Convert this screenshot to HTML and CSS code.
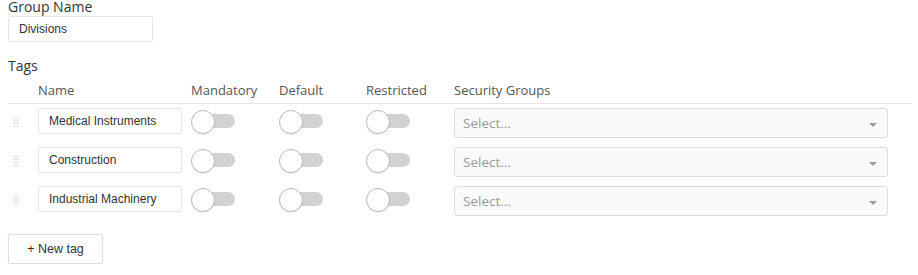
FILE: index.html
```html
<!DOCTYPE HTML>
<html>

<head>
  <title>Tag Group</title>
  <meta charset="utf-8">
  <link rel="stylesheet" href="styles.css">
</head>
<body>
  <form class="group-form" name="group_form">
    <label class="field-label" for="group_name_input">Group Name</label>
    <input class="text-input group-name" id="group_name_input" type="text" value="Divisions">

    <div class="field-label tags-label">Tags</div>
    <div class="tags-table">
      <div class="tags-row tags-head">
        <span></span>
        <span>Name</span>
        <span>Mandatory</span>
        <span>Default</span>
        <span>Restricted</span>
        <span>Security Groups</span>
      </div>

      <div class="tags-row tag">
        <span class="drag-handle"></span>
        <input class="text-input tag-name" type="text" value="Medical Instruments">
        <span class="toggle"></span>
        <span class="toggle"></span>
        <span class="toggle"></span>
        <div class="select"><span>Select...</span><span class="select-arrow"></span></div>
      </div>
      <div class="tags-row tag">
        <span class="drag-handle"></span>
        <input class="text-input tag-name" type="text" value="Construction">
        <span class="toggle"></span>
        <span class="toggle"></span>
        <span class="toggle"></span>
        <div class="select"><span>Select...</span><span class="select-arrow"></span></div>
      </div>
      <div class="tags-row tag">
        <span class="drag-handle"></span>
        <input class="text-input tag-name" type="text" value="Industrial Machinery">
        <span class="toggle"></span>
        <span class="toggle"></span>
        <span class="toggle"></span>
        <div class="select"><span>Select...</span><span class="select-arrow"></span></div>
      </div>
    </div>

    <button type="button" class="btn new-tag">+ New tag</button>
  </form>
</body>

</html>
```

FILE: styles.css
```css
* {
  box-sizing: border-box;
}
body {
  margin: 0;
  padding: 0 6px 0 8px;
  font-family: "Open Sans", sans-serif;
  color: #333;
  background: #fff;
}
.group-form {
  display: flex;
  flex-direction: column;
  align-items: flex-start;
}
.field-label {
  display: block;
  font-size: 14px;
  line-height: 14px;
  height: 14px;
  color: #333;
}
.tags-label {
  margin-top: 17px;
}
.text-input {
  height: 26px;
  padding: 0 10px;
  border: 1px solid #e6e6e6;
  border-radius: 2px;
  font-family: "Liberation Sans", Arial, sans-serif;
  font-size: 12px;
  color: #333;
  background: #fff;
  outline: none;
}
.group-name {
  margin-top: 2px;
  width: 145px;
}
.tags-table {
  align-self: stretch;
  margin-top: 9px;
}
.tags-row {
  display: grid;
  grid-template-columns: 30px 153px 88px 87px 88px 434px;
  align-items: start;
}
.tags-head {
  font-size: 13px;
  line-height: 16px;
  color: #555;
  padding-bottom: 5px;
  border-bottom: 1px solid #e6e6e6;
  margin-bottom: 4px;
}
.tag {
  height: 30px;
  margin-bottom: 9px;
}
.tag-name {
  width: 144px;
}
.drag-handle {
  width: 6px;
  height: 12px;
  margin: 8px 0 0 5px;
  background-image: radial-gradient(circle, #dcdcdc 0.9px, transparent 1.1px);
  background-size: 3px 3px;
}
.toggle {
  position: relative;
  width: 44px;
  height: 22px;
  margin-top: 2px;
}
.toggle::before {
  content: "";
  position: absolute;
  left: 9px;
  right: 0;
  top: 4px;
  height: 14px;
  border-radius: 7px;
  background: #d2d2d2;
}
.toggle::after {
  content: "";
  position: absolute;
  left: 0;
  top: 0;
  width: 22px;
  height: 22px;
  border-radius: 50%;
  background: #fff;
  border: 1px solid #b9b9b9;
  box-shadow: 0 1px 1px rgba(0, 0, 0, .08);
}
.select {
  display: flex;
  align-items: center;
  justify-content: space-between;
  height: 30px;
  padding: 0 10px 0 8px;
  border: 1px solid #dcdcdc;
  border-radius: 3px;
  background: #fafafa;
  font-size: 13.5px;
  color: #999;
}
.select-arrow {
  width: 0;
  height: 0;
  margin-top: 3px;
  border-left: 4px solid transparent;
  border-right: 4px solid transparent;
  border-top: 4px solid #999;
}
.btn {
  margin-top: 9px;
  width: 95px;
  height: 30px;
  padding: 0;
  border: 1px solid #dedede;
  border-radius: 2px;
  background: #fff;
  box-shadow: 0 1px 2px rgba(0, 0, 0, .08);
  font-family: "Liberation Sans", Arial, sans-serif;
  font-size: 12.5px;
  color: #333;
  cursor: pointer;
}
```
